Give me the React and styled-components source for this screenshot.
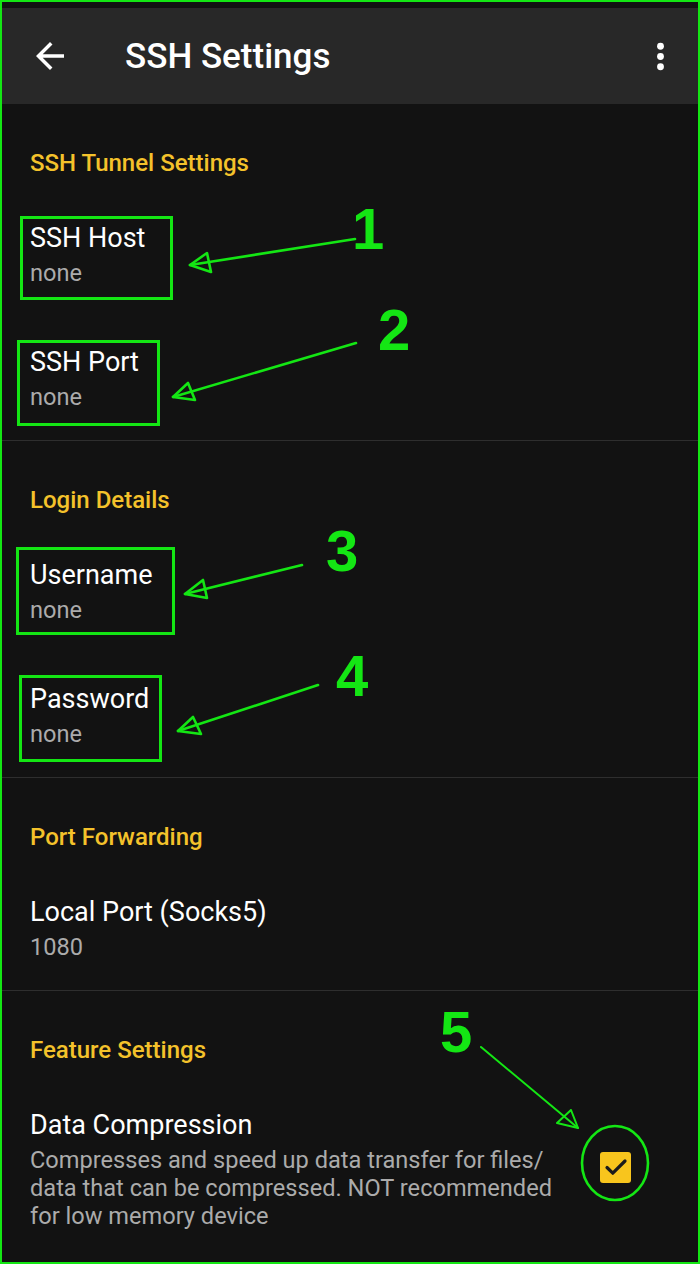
import React from "react";
import styled, { createGlobalStyle } from "styled-components";

const GREEN = "#14e614";

const GlobalStyle = createGlobalStyle`
  html, body {
    margin: 0;
    padding: 0;
    background: #121212;
  }
  * {
    box-sizing: border-box;
  }
`;

const sections = [
  {
    title: "SSH Tunnel Settings",
    items: [
      { title: "SSH Host", summary: "none", frame: { top: -5, left: -10, width: 153, height: 84 } },
      { title: "SSH Port", summary: "none", frame: { top: -5, left: -13, width: 143, height: 86 } },
    ],
  },
  {
    title: "Login Details",
    items: [
      { title: "Username", summary: "none", frame: { top: -11, left: -14, width: 159, height: 88 } },
      { title: "Password", summary: "none", frame: { top: -7, left: -11, width: 143, height: 87 } },
    ],
  },
  {
    title: "Port Forwarding",
    items: [{ title: "Local Port (Socks5)", summary: "1080" }],
  },
];

const arrows = [
  { line: "355,239 190,265", head: "190,265 207,253 211,272", w: 2.6 },
  { line: "356,343 173,397", head: "173,397 188,383 195,400", w: 2.6 },
  { line: "302,565 185,594", head: "185,594 203,580 207,598", w: 2.6 },
  { line: "318,685 178,731", head: "178,731 193,717 201,734", w: 2.6 },
  { line: "481,1047 578,1128", head: "578,1128 571,1110 557,1123", w: 2 },
];

const callouts = [
  { n: "1", top: 200, left: 352 },
  { n: "2", top: 301, left: 378 },
  { n: "3", top: 522, left: 326 },
  { n: "4", top: 647, left: 336 },
  { n: "5", top: 1003, left: 440 },
];

export default function App() {
  return (
    <Page>
      <GlobalStyle />
      <StatusStrip />
      <Toolbar>
        <BackButton viewBox="0 0 24 24">
          <path d="M20 11H7.83l5.59-5.59L12 4l-8 8 8 8 1.41-1.41L7.83 13H20v-2z" fill="#fff" />
        </BackButton>
        <ToolbarTitle>SSH Settings</ToolbarTitle>
        <MenuButton viewBox="0 0 24 24">
          <circle cx="12" cy="6" r="2" fill="#fff" />
          <circle cx="12" cy="12" r="2" fill="#fff" />
          <circle cx="12" cy="18" r="2" fill="#fff" />
        </MenuButton>
      </Toolbar>

      {sections.map((sec) => (
        <React.Fragment key={sec.title}>
          <Category>
            <CategoryTitle>{sec.title}</CategoryTitle>
            {sec.items.map((it) => (
              <Item key={it.title}>
                <TextBlock>
                  <ItemTitle>{it.title}</ItemTitle>
                  <Summary>{it.summary}</Summary>
                  {it.frame && (
                    <Frame
                      $top={it.frame.top}
                      $left={it.frame.left}
                      $width={it.frame.width}
                      $height={it.frame.height}
                    />
                  )}
                </TextBlock>
              </Item>
            ))}
          </Category>
          <Divider />
        </React.Fragment>
      ))}

      <Category>
        <CategoryTitle>Feature Settings</CategoryTitle>
        <Item>
          <CheckRow>
            <TextBlock>
              <ItemTitle>Data Compression</ItemTitle>
              <Summary>
                Compresses and speed up data transfer for files/<wbr />data that can be
                compressed. NOT recommended for low memory device
              </Summary>
            </TextBlock>
            <CheckBox>
              <svg width="31" height="31" viewBox="0 0 31 31">
                <polyline
                  points="7,15.5 12.8,21.2 25,9"
                  fill="none"
                  stroke="#1b1b1b"
                  strokeWidth="3.2"
                  strokeLinecap="round"
                  strokeLinejoin="round"
                />
              </svg>
            </CheckBox>
          </CheckRow>
        </Item>
      </Category>

      <Overlay width="700" height="1264" viewBox="0 0 700 1264">
        {arrows.map((a, i) => (
          <g key={i} fill="none" stroke={GREEN} strokeWidth={a.w} strokeLinejoin="round" strokeLinecap="round">
            <polyline points={a.line} />
            <polygon points={a.head} />
          </g>
        ))}
        <ellipse cx="615" cy="1163" rx="33" ry="37" fill="none" stroke={GREEN} strokeWidth="2.6" />
      </Overlay>
      {callouts.map((c) => (
        <Callout key={c.n} $top={c.top} $left={c.left}>
          {c.n}
        </Callout>
      ))}
    </Page>
  );
}

const Page = styled.div`
  position: relative;
  width: 700px;
  height: 1264px;
  overflow: hidden;
  background: #121212;
  border: 2px solid ${GREEN};
  font-family: Roboto, "Noto Sans", sans-serif;
`;

const StatusStrip = styled.div`
  height: 6px;
  background: #121212;
`;

const Toolbar = styled.div`
  display: flex;
  align-items: center;
  height: 96px;
  padding: 0 17px 0 27px;
  background: #282828;
`;

const BackButton = styled.svg`
  width: 42px;
  height: 42px;
  flex-shrink: 0;
`;

const ToolbarTitle = styled.div`
  flex: 1;
  margin-left: 54px;
  color: #fff;
  font-size: 35px;
  font-weight: 500;
  line-height: 40px;
  margin-top: 2px;
`;

const MenuButton = styled.svg`
  width: 41px;
  height: 41px;
  flex-shrink: 0;
`;

const Category = styled.section`
  padding-top: 44px;
`;

const CategoryTitle = styled.h3`
  margin: 0 0 14px;
  padding-left: 28px;
  color: #f4c22b;
  font-size: 24px;
  font-weight: 500;
  line-height: 30px;
`;

const Item = styled.div`
  padding: 29px 0 29px 28px;
`;

const TextBlock = styled.div`
  position: relative;
  flex: 1;
`;

const ItemTitle = styled.div`
  color: #fff;
  font-size: 27px;
  line-height: 34px;
`;

const Summary = styled.div`
  margin-top: 4px;
  color: #ababab;
  font-size: 23.6px;
  line-height: 28px;
`;

const Frame = styled.div`
  position: absolute;
  top: ${(p) => p.$top}px;
  left: ${(p) => p.$left}px;
  width: ${(p) => p.$width}px;
  height: ${(p) => p.$height}px;
  border: 3px solid ${GREEN};
`;

const CheckRow = styled.div`
  display: flex;
  align-items: center;
  gap: 30px;
  padding-right: 67px;
`;

const CheckBox = styled.div`
  width: 31px;
  height: 31px;
  flex-shrink: 0;
  border-radius: 3px;
  background: #f8c51d;
  margin-top: -4px;
  svg {
    display: block;
  }
`;

const Divider = styled.div`
  height: 1px;
  background: #2e2e2e;
`;

const Overlay = styled.svg`
  position: absolute;
  top: -2px;
  left: -2px;
  pointer-events: none;
`;

const Callout = styled.span`
  position: absolute;
  top: ${(p) => p.$top - 2}px;
  left: ${(p) => p.$left - 2}px;
  color: ${GREEN};
  font-family: "Liberation Sans", Arial, sans-serif;
  font-size: 58px;
  font-weight: 700;
  line-height: 1;
`;
